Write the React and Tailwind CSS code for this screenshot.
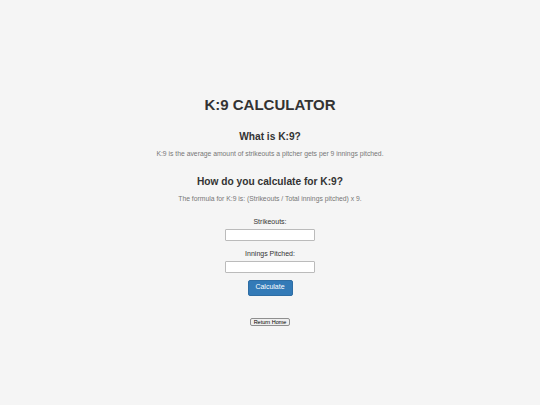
import React from "react";

function App() {
  return (
    <div className="min-h-[405px] bg-[#f5f5f5] text-[#333] font-['Liberation_Sans',Arial,sans-serif] flex flex-col items-center text-center">
      <h1 className="mt-[96px] text-[15px] leading-[18px] font-bold">K:9 CALCULATOR</h1>

      <h2 className="mt-[15.5px] text-[10.2px] leading-[13px] font-bold">What is K:9?</h2>
      <p className="mt-[7.5px] text-[6.8px] leading-[8px] text-[#777]">
        K:9 is the average amount of strikeouts a pitcher gets per 9 innings pitched.
      </p>

      <h2 className="mt-[17px] text-[10.2px] leading-[13px] font-bold">How do you calculate for K:9?</h2>
      <p className="mt-[7px] text-[6.8px] leading-[8px] text-[#777]">
        The formula for K:9 is: (Strikeouts / Total innings pitched) x 9.
      </p>

      <form className="mt-[13.5px] flex flex-col items-center" onSubmit={(e) => e.preventDefault()}>
        <label className="text-[7px] leading-[9px] text-[#333]">Strikeouts:</label>
        <input
          type="text"
          className="mt-[3.5px] w-[90px] h-[12px] bg-white border border-[#bbb] rounded-[1px]"
        />
        <label className="mt-[7.5px] text-[7px] leading-[9px] text-[#333]">Innings Pitched:</label>
        <input
          type="text"
          className="mt-[3.5px] w-[90px] h-[12px] bg-white border border-[#bbb] rounded-[1px]"
        />
        <button
          type="submit"
          className="mt-[6.5px] w-[45px] h-[16px] bg-[#337ab7] border border-[#2e6da4] rounded-[2px] text-white text-[7px]"
        >
          Calculate
        </button>
      </form>

      <button className="mt-[22.5px] px-[3px] h-[8px] bg-[#efefef] border border-[#8f8f8f] rounded-[2px] text-[5.5px] leading-[6px] text-black">
        Return Home
      </button>
    </div>
  );
}

export default App;
